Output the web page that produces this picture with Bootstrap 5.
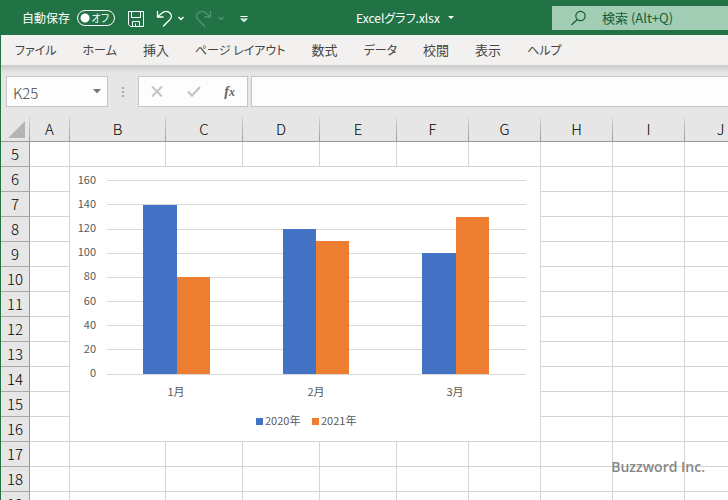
<!DOCTYPE html>
<html lang="ja">
<head>
<meta charset="utf-8">
<meta name="viewport" content="width=device-width, initial-scale=1">
<title>Excelグラフ.xlsx</title>
<link href="https://cdn.jsdelivr.net/npm/bootstrap@5.3.0/dist/css/bootstrap.min.css" rel="stylesheet">
<style>
  body { font-family: "Noto Sans CJK JP", sans-serif; font-feature-settings: "palt"; font-size: 13px; line-height: 20px; background: #e6e6e6; }
  button { font-feature-settings: inherit; }
  svg { display: block; flex: none; }
  .plain-btn { border: 0; padding: 0; background: none; color: inherit; line-height: 20px; }

  .title-bar { height: 35px; background: #217346; color: #fff; }
  .title-left { flex: 0 0 356px; padding-left: 22px; }
  .autosave { font-size: 12px; }
  .switch-box { position: relative; width: 38px; height: 16px; margin: 0 13px 0 7px; }
  .switch-box input { appearance: none; display: block; width: 38px; height: 16px; margin: 0; border: 1px solid #fff; border-radius: 8px;
    background: radial-gradient(circle at 7px 7px, #fff 4px, transparent 5px); }
  .switch-box span { position: absolute; right: 6px; top: 0; font-size: 10px; line-height: 16px; pointer-events: none; }
  .quick-tools { gap: 11px; padding-top: 3px; }
  .file-name { font-size: 12px; }
  .search-box { flex: 0 1 176px; height: 24px; background: #a0cdb3; color: #185c37; padding-left: 19px; gap: 15px; }
  .search-box input { min-width: 0; width: 100%; border: 0; padding: 0; background: none; color: inherit; font-size: 13px; outline: 0; }
  .search-box input::placeholder { color: #185c37; opacity: 1; }

  .work-area { border-left: 1px solid #217346; }
  .ribbon-tabs { height: 30px; background: #f3f1ef; color: #444; padding-left: 14px; gap: 26px; }
  .ribbon-tabs button { white-space: nowrap; }
  .ribbon-tabs .kana { font-size: 12px; }

  .formula-row { padding: 11px 0 10px 5px; background: linear-gradient(#cbc9c8, #e6e6e6 8px); }
  .field { height: 31px; border: 1px solid #c6c6c6; background: #fdfdfd; }
  .name-box { width: 102px; padding: 0 6px; }
  .name-box input { width: 70px; border: 0; padding: 3px 0 0; background: none; color: #444; font-size: 15px; font-weight: 300; outline: 0; }
  .fx-box { width: 110px; padding: 0 12px; }
  .fx-box button { line-height: 16px; }
  .fx-box .fx-sign { font: italic bold 14px/16px "Liberation Serif", serif; color: #666; }
  .fx-sign span { font-size: 12px; }
  .formula-input { min-width: 0; border-right: 0; padding: 0 8px; outline: 0; margin-left: 3px; }

  .sheet { table-layout: fixed; width: 755px; border-collapse: separate; border-spacing: 0; color: #000; }
  .sheet th { font-weight: 300; font-size: 15px; line-height: 24px; text-align: center; padding: 0; }
  .sheet thead th { height: 25px; border-bottom: 1px solid #999; border-right: 1px solid;
    border-image: linear-gradient(#d8d8d8, #999) 1; }
  .sheet tbody th { height: 25px; border-right: 1px solid #999; border-bottom: 1px solid #aaa; }
  .sheet td { height: 25px; padding: 0; background: #fff; border-right: 1px solid #d4d4d4; border-bottom: 1px solid #d4d4d4; }
  .col-rowhead { width: 29px; } .col-a { width: 40px; } .col-b { width: 96px; } .col-wide { width: 77px; } .col-std { width: 72px; }
  .chart text { font-size: 11px; fill: #595959; }
  .watermark { position: absolute; right: 23px; bottom: 23px; font: 600 14px/20px "Open Sans", sans-serif; color: #888; }
</style>
<script src="https://cdn.jsdelivr.net/npm/bootstrap@5.3.0/dist/js/bootstrap.bundle.min.js"></script>
</head>
<body class="vh-100 overflow-hidden position-relative d-flex flex-column">
<header class="title-bar d-flex align-items-center flex-shrink-0">
  <div class="title-left d-flex align-items-center">
    <label class="autosave" for="autosave">自動保存</label>
    <div class="switch-box"><input id="autosave" type="checkbox" role="switch"><span>オフ</span></div>
    <div class="quick-tools d-flex align-items-center">
    <button class="plain-btn" aria-label="上書き保存">
      <svg width="17" height="17" viewBox="0 0 17 17" fill="none" stroke="#fff"><path d="M.5.5h15v15h-13l-2-2zM3.500.5v6h9v-6M4.500 15.500v-5h7v5M7.500 15v-2.500"/></svg>
    </button>
    <button class="plain-btn d-flex align-items-center gap-1" aria-label="元に戻す">
      <svg width="17" height="18" viewBox="0 0 17 18" fill="none" stroke="#fff" stroke-width="1.300"><path d="M1.500 1v6h6M1.800 6.700L6 3c2.500-2.300 6-2.200 8 0s1.500 5-.500 7L7 16.500"/></svg>
      <svg width="8" height="6" viewBox="0 0 8 6" fill="none" stroke="#fff" stroke-width="1.400"><path d="M1.500 1L4 3.500 6.500 1"/></svg>
    </button>
    <button class="plain-btn d-flex align-items-center gap-1" aria-label="やり直し">
      <svg width="17" height="18" viewBox="0 0 17 18" fill="none" stroke="#4f9670" stroke-width="1.300"><path d="M14.500 1v6h-6M14.200 6.700L10 3C7.500.700 4 .800 2 3s-1.500 5 .500 7L9 16.500"/></svg>
      <svg width="8" height="6" viewBox="0 0 8 6" fill="none" stroke="#4f9670" stroke-width="1.400"><path d="M1.500 1L4 3.500 6.500 1"/></svg>
    </button>
    <button class="plain-btn ms-1" aria-label="クイック アクセス ツール バーのカスタマイズ">
      <svg width="8" height="8" viewBox="0 0 8 8" fill="none" stroke="#fff" stroke-width="1.200"><path d="M.500 1.500h7M1.500 4L4 6.500 6.500 4z"/></svg>
    </button>
    </div>
  </div>
  <button class="plain-btn file-name d-flex align-items-center gap-2 me-auto">Excelグラフ.xlsx
    <svg width="6" height="3" viewBox="0 0 6 3" fill="#fff"><path d="M0 0h6L3 3z"/></svg>
  </button>
  <div class="search-box d-flex align-items-center">
    <svg width="16" height="16" viewBox="0 0 16 16" fill="none" stroke="#185c37" stroke-width="1.200"><circle cx="9.500" cy="6" r="4.700"/><path d="M6.300 9.500L.500 15"/></svg>
    <input type="text" aria-label="検索" placeholder="検索 (Alt+Q)">
  </div>
</header>

<main class="work-area flex-fill overflow-hidden">
  <nav class="ribbon-tabs d-flex align-items-center">
    <button class="plain-btn kana">ファイル</button>
    <button class="plain-btn kana">ホーム</button>
    <button class="plain-btn">挿入</button>
    <button class="plain-btn kana">ページ レイアウト</button>
    <button class="plain-btn">数式</button>
    <button class="plain-btn kana">データ</button>
    <button class="plain-btn">校閲</button>
    <button class="plain-btn">表示</button>
    <button class="plain-btn kana">ヘルプ</button>
  </nav>

  <div class="formula-row d-flex align-items-center">
    <div class="field name-box d-flex align-items-center justify-content-between">
      <input type="text" value="K25" aria-label="名前ボックス">
      <button class="plain-btn" aria-label="名前の一覧"><svg width="8" height="5" viewBox="0 0 8 5" fill="#777"><path d="M0 0h8L4 4.500z"/></svg></button>
    </div>
    <svg width="30" height="12" viewBox="0 0 30 12" fill="#aaa"><path d="M14 1h2v2h-2zM14 5h2v2h-2zM14 9h2v2h-2z"/></svg>
    <div class="field fx-box d-flex align-items-center justify-content-between">
      <button class="plain-btn" aria-label="キャンセル"><svg width="12" height="11" viewBox="0 0 12 11" fill="none" stroke="#c4c4c4" stroke-width="2"><path d="M1 .500l10 10M11 .500l-10 10"/></svg></button>
      <button class="plain-btn" aria-label="入力"><svg width="14" height="11" viewBox="0 0 14 11" fill="none" stroke="#c4c4c4" stroke-width="2.400"><path d="M1 5.500l4 4L13 1"/></svg></button>
      <button class="plain-btn fx-sign" aria-label="関数の挿入">f<span>x</span></button>
    </div>
    <input class="field formula-input flex-fill" type="text" aria-label="数式バー">
  </div>

  <table class="sheet">
    <colgroup>
      <col class="col-rowhead"><col class="col-a"><col class="col-b"><col class="col-wide"><col class="col-wide"><col class="col-wide"><col class="col-std"><col class="col-std"><col class="col-std"><col class="col-std"><col class="col-std">
    </colgroup>
    <thead>
      <tr>
        <th aria-label="すべて選択"><svg class="ms-auto me-1" width="17" height="17" viewBox="0 0 17 17" fill="#b5b5b5"><path d="M17 0v17H0z"/></svg></th>
        <th>A</th><th>B</th><th>C</th><th>D</th><th>E</th><th>F</th><th>G</th><th>H</th><th>I</th><th>J</th>
      </tr>
    </thead>
    <tbody>
      <tr><th>5</th><td></td><td></td><td></td><td></td><td></td><td></td><td></td><td></td><td></td><td></td></tr>
      <tr><th>6</th><td></td>
        <td colspan="6" rowspan="11">
          <svg class="chart" width="470" height="274" viewBox="70 167 470 274" role="img" aria-label="2020年と2021年の月別棒グラフ">
            <path d="M107 180.500h419M107 204.500h419M107 229.500h419M107 253.500h419M107 277.500h419M107 301.500h419M107 325.500h419M107 349.500h419M107 374.500h419" stroke="#d9d9d9"/>
            <g fill="#4472c4"><path d="M143 205h34v169h-34zM283 229h33v145h-33zM422 253h34v121h-34z"/><rect x="256" y="418" width="7" height="7"/></g>
            <g fill="#ed7d31"><path d="M177 277h33v97h-33zM316 241h33v133h-33zM456 217h33v157h-33z"/><rect x="312" y="418" width="7" height="7"/></g>
            <g text-anchor="end">
              <text x="96" y="184">160</text><text x="96" y="208">140</text><text x="96" y="232">120</text><text x="96" y="256">100</text><text x="96" y="280">80</text><text x="96" y="305">60</text><text x="96" y="329">40</text><text x="96" y="353">20</text><text x="96" y="377">0</text>
            </g>
            <g text-anchor="middle">
              <text x="176" y="396">1月</text><text x="316" y="396">2月</text><text x="455" y="396">3月</text>
            </g>
            <text x="265" y="425">2020年</text><text x="321" y="425">2021年</text>
          </svg>
        </td>
        <td></td><td></td><td></td></tr>
      <tr><th>7</th><td></td><td></td><td></td><td></td></tr>
      <tr><th>8</th><td></td><td></td><td></td><td></td></tr>
      <tr><th>9</th><td></td><td></td><td></td><td></td></tr>
      <tr><th>10</th><td></td><td></td><td></td><td></td></tr>
      <tr><th>11</th><td></td><td></td><td></td><td></td></tr>
      <tr><th>12</th><td></td><td></td><td></td><td></td></tr>
      <tr><th>13</th><td></td><td></td><td></td><td></td></tr>
      <tr><th>14</th><td></td><td></td><td></td><td></td></tr>
      <tr><th>15</th><td></td><td></td><td></td><td></td></tr>
      <tr><th>16</th><td></td><td></td><td></td><td></td></tr>
      <tr><th>17</th><td></td><td></td><td></td><td></td><td></td><td></td><td></td><td></td><td></td><td></td></tr>
      <tr><th>18</th><td></td><td></td><td></td><td></td><td></td><td></td><td></td><td></td><td></td><td></td></tr>
      <tr><th>19</th><td></td><td></td><td></td><td></td><td></td><td></td><td></td><td></td><td></td><td></td></tr>
    </tbody>
  </table>
</main>
<div class="watermark">Buzzword Inc.</div>
</body>
</html>
